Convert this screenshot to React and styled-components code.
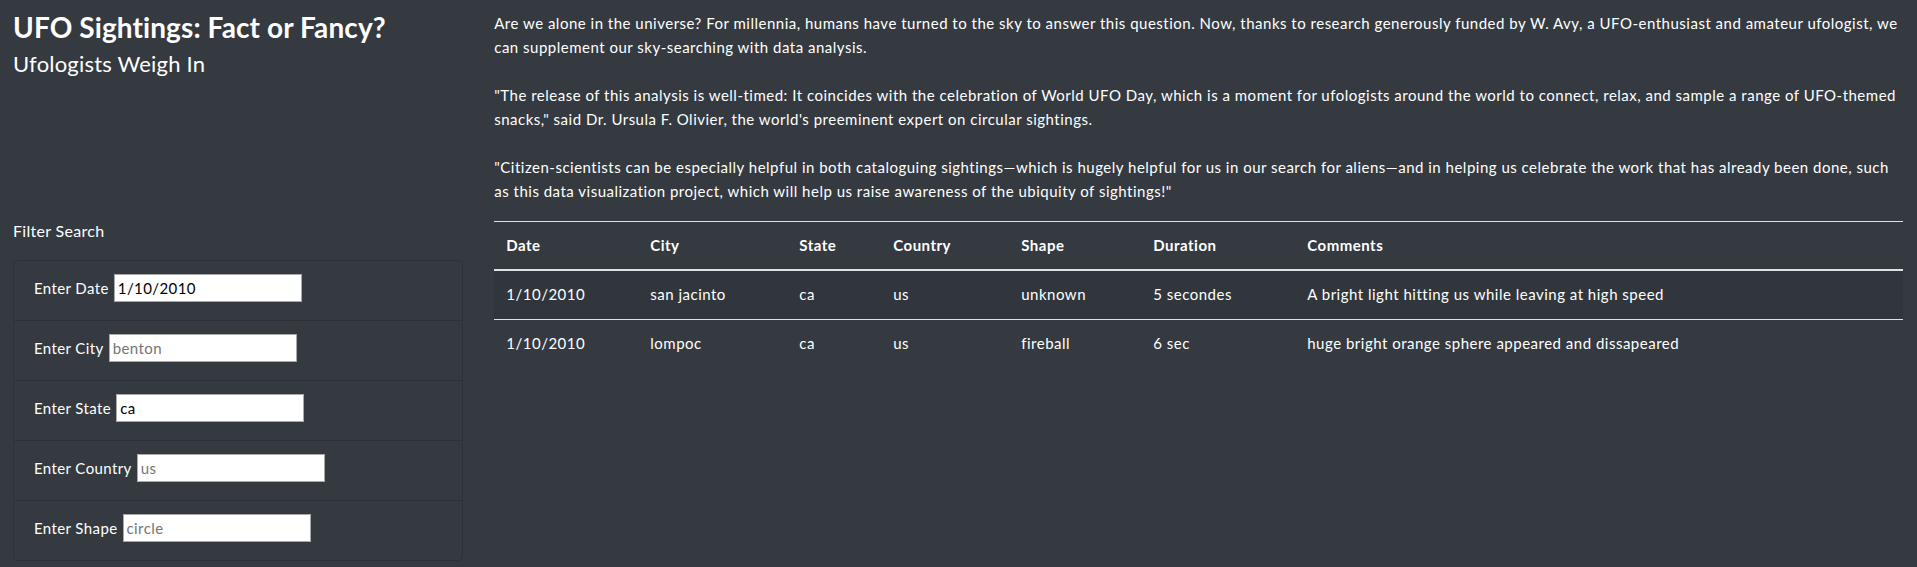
import React from "react";
import styled, { createGlobalStyle } from "styled-components";

const GlobalStyle = createGlobalStyle`
  html, body {
    margin: 0;
    padding: 0;
    background: #343a40;
  }
  body {
    font-family: Lato, "Open Sans", sans-serif;
    color: #fff;
    font-size: 15px;
    letter-spacing: 0.5px;
  }
  * {
    box-sizing: border-box;
  }
`;

const Page = styled.div`
  display: grid;
  grid-template-columns: 25% 75%;
  min-height: 567px;
`;

const Sidebar = styled.aside`
  padding: 11px 16px 0 13px;
`;

const Title = styled.h1`
  margin: 0;
  font-size: 28px;
  font-weight: 700;
  line-height: 1.2;
  letter-spacing: 0.1px;
`;

const Subtitle = styled.h2`
  margin: 6px 0 0;
  font-size: 22px;
  font-weight: 400;
  line-height: 1.2;
  letter-spacing: 0.2px;
`;

const FilterHeading = styled.div`
  margin-top: 142px;
  font-size: 16px;
  line-height: 24px;
  letter-spacing: 0.3px;
`;

const FilterCard = styled.ul`
  list-style: none;
  margin: 17px 0 0;
  padding: 0;
  border: 1px solid rgba(0, 0, 0, 0.125);
  border-radius: 4px;
`;

const FilterRow = styled.li`
  display: flex;
  align-items: center;
  height: 59px;
  padding: 12px 20px 17px;
  & + & {
    border-top: 1px solid rgba(0, 0, 0, 0.125);
    height: 60px;
    padding-top: 13px;
  }
`;

const Label = styled.label`
  font-size: 15px;
  letter-spacing: 0.4px;
  white-space: nowrap;
`;

const Input = styled.input`
  margin-left: 5px;
  width: 188px;
  height: 28px;
  padding: 0 3px;
  border: 1px solid #a9a9a9;
  background: #fff;
  color: #000;
  font-family: Lato, "Open Sans", sans-serif;
  font-size: 15px;
  letter-spacing: 0.4px;
  outline: none;
  &::placeholder {
    color: #757575;
  }
`;

const Main = styled.main`
  padding: 12px 15px 0 15px;
  min-width: 0;
`;

const Paragraph = styled.p`
  margin: 0 0 25px;
  font-size: 15px;
  line-height: 23.6px;
  &:last-of-type {
    margin-bottom: 17px;
  }
`;

const Table = styled.table`
  width: 100%;
  table-layout: fixed;
  border-collapse: collapse;
  font-size: 15px;
  line-height: 23.5px;
`;

const Col = styled.col`
  width: ${(p) => p.$w}px;
`;

const Th = styled.th`
  text-align: left;
  font-weight: 700;
  padding: 12px;
  border-top: 1px solid #dee2e6;
  border-bottom: 2px solid #dee2e6;
`;

const Tr = styled.tr`
  background: ${(p) => (p.$striped ? "rgba(0, 0, 0, 0.06)" : "transparent")};
`;

const Td = styled.td`
  padding: 12px;
  border-top: 1px solid #dee2e6;
  white-space: nowrap;
`;

const filters = [
  { label: "Enter Date", value: "1/10/2010", placeholder: "1/10/2010" },
  { label: "Enter City", value: "", placeholder: "benton" },
  { label: "Enter State", value: "ca", placeholder: "ca" },
  { label: "Enter Country", value: "", placeholder: "us" },
  { label: "Enter Shape", value: "", placeholder: "circle" },
];

const columns = [
  { name: "Date", w: 144 },
  { name: "City", w: 149 },
  { name: "State", w: 94 },
  { name: "Country", w: 128 },
  { name: "Shape", w: 132 },
  { name: "Duration", w: 154 },
  { name: "Comments", w: 608 },
];

const sightings = [
  ["1/10/2010", "san jacinto", "ca", "us", "unknown", "5 secondes", "A bright light hitting us while leaving at high speed"],
  ["1/10/2010", "lompoc", "ca", "us", "fireball", "6 sec", "huge bright orange sphere appeared and dissapeared"],
];

export default function App() {
  return (
    <>
      <GlobalStyle />
      <Page>
        <Sidebar>
          <Title>UFO Sightings: Fact or Fancy?</Title>
          <Subtitle>Ufologists Weigh In</Subtitle>
          <FilterHeading>Filter Search</FilterHeading>
          <FilterCard>
            {filters.map((f) => (
              <FilterRow key={f.label}>
                <Label>{f.label}</Label>
                <Input type="text" defaultValue={f.value} placeholder={f.placeholder} />
              </FilterRow>
            ))}
          </FilterCard>
        </Sidebar>
        <Main>
          <Paragraph>
            Are we alone in the universe? For millennia, humans have turned to the sky to answer this question. Now, thanks
            to research generously funded by W. Avy, a UFO-enthusiast and amateur ufologist, we can supplement our
            sky-searching with data analysis.
          </Paragraph>
          <Paragraph>
            "The release of this analysis is well-timed: It coincides with the celebration of World UFO Day, which is a
            moment for ufologists around the world to connect, relax, and sample a range of UFO-themed snacks," said Dr.
            Ursula F. Olivier, the world's preeminent expert on circular sightings.
          </Paragraph>
          <Paragraph>
            "Citizen-scientists can be especially helpful in both cataloguing sightings—which is hugely helpful for us in
            our search for aliens—and in helping us celebrate the work that has already been done, such as this data
            visualization project, which will help us raise awareness of the ubiquity of sightings!"
          </Paragraph>
          <Table>
            <colgroup>
              {columns.map((c) => (
                <Col key={c.name} $w={c.w} />
              ))}
            </colgroup>
            <thead>
              <tr>
                {columns.map((c) => (
                  <Th key={c.name}>{c.name}</Th>
                ))}
              </tr>
            </thead>
            <tbody>
              {sightings.map((row, i) => (
                <Tr key={i} $striped={i % 2 === 0}>
                  {row.map((cell, j) => (
                    <Td key={j}>{cell}</Td>
                  ))}
                </Tr>
              ))}
            </tbody>
          </Table>
        </Main>
      </Page>
    </>
  );
}
